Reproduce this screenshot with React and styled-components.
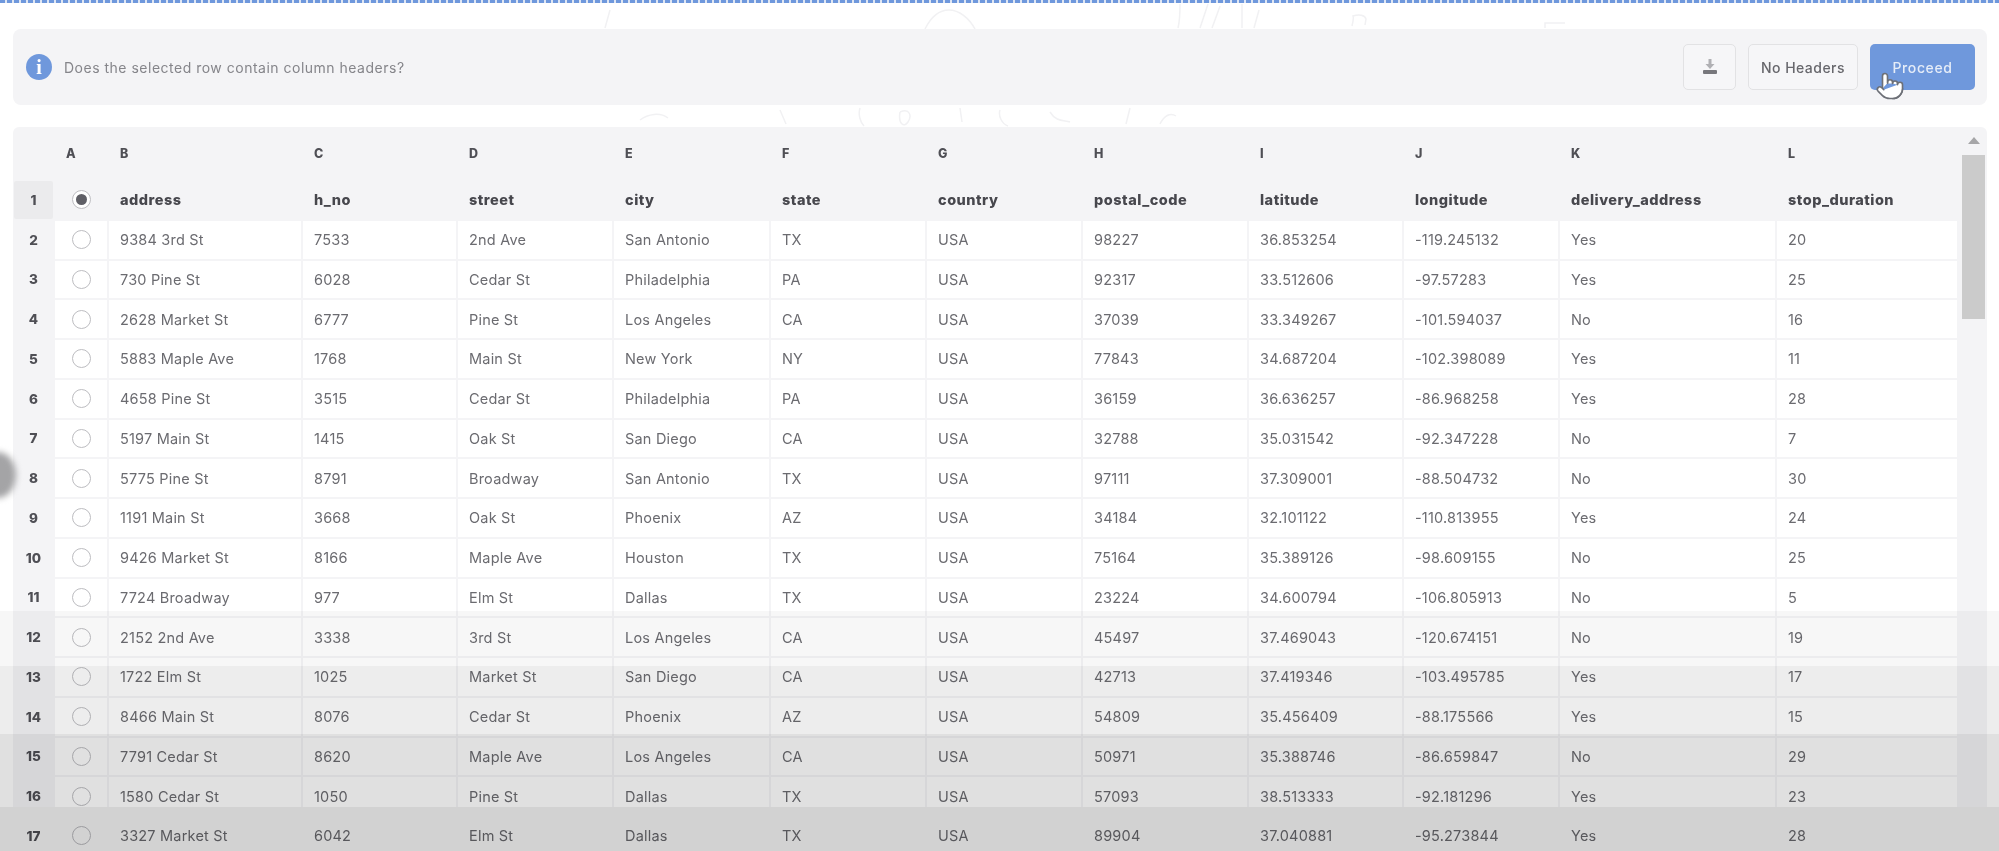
import { Pointer } from "lucide-react";
import styled, { createGlobalStyle } from "styled-components";

const columnLetters = ["B", "C", "D", "E", "F", "G", "H", "I", "J", "K", "L"];

const headers = [
  "address",
  "h_no",
  "street",
  "city",
  "state",
  "country",
  "postal_code",
  "latitude",
  "longitude",
  "delivery_address",
  "stop_duration",
];

const rows = [
  ["9384 3rd St", "7533", "2nd Ave", "San Antonio", "TX", "USA", "98227", "36.853254", "-119.245132", "Yes", "20"],
  ["730 Pine St", "6028", "Cedar St", "Philadelphia", "PA", "USA", "92317", "33.512606", "-97.57283", "Yes", "25"],
  ["2628 Market St", "6777", "Pine St", "Los Angeles", "CA", "USA", "37039", "33.349267", "-101.594037", "No", "16"],
  ["5883 Maple Ave", "1768", "Main St", "New York", "NY", "USA", "77843", "34.687204", "-102.398089", "Yes", "11"],
  ["4658 Pine St", "3515", "Cedar St", "Philadelphia", "PA", "USA", "36159", "36.636257", "-86.968258", "Yes", "28"],
  ["5197 Main St", "1415", "Oak St", "San Diego", "CA", "USA", "32788", "35.031542", "-92.347228", "No", "7"],
  ["5775 Pine St", "8791", "Broadway", "San Antonio", "TX", "USA", "97111", "37.309001", "-88.504732", "No", "30"],
  ["1191 Main St", "3668", "Oak St", "Phoenix", "AZ", "USA", "34184", "32.101122", "-110.813955", "Yes", "24"],
  ["9426 Market St", "8166", "Maple Ave", "Houston", "TX", "USA", "75164", "35.389126", "-98.609155", "No", "25"],
  ["7724 Broadway", "977", "Elm St", "Dallas", "TX", "USA", "23224", "34.600794", "-106.805913", "No", "5"],
  ["2152 2nd Ave", "3338", "3rd St", "Los Angeles", "CA", "USA", "45497", "37.469043", "-120.674151", "No", "19"],
  ["1722 Elm St", "1025", "Market St", "San Diego", "CA", "USA", "42713", "37.419346", "-103.495785", "Yes", "17"],
  ["8466 Main St", "8076", "Cedar St", "Phoenix", "AZ", "USA", "54809", "35.456409", "-88.175566", "Yes", "15"],
  ["7791 Cedar St", "8620", "Maple Ave", "Los Angeles", "CA", "USA", "50971", "35.388746", "-86.659847", "No", "29"],
  ["1580 Cedar St", "1050", "Pine St", "Dallas", "TX", "USA", "57093", "38.513333", "-92.181296", "Yes", "23"],
  ["3327 Market St", "6042", "Elm St", "Dallas", "TX", "USA", "89904", "37.040881", "-95.273844", "Yes", "28"],
];

const GlobalStyle = createGlobalStyle`
  html, body {
    margin: 0;
    background: #ffffff;
    overflow: hidden;
  }
  * {
    box-sizing: border-box;
  }
`;

const Page = styled.div`
  position: relative;
  height: 851px;
  overflow: hidden;
  background: #ffffff;
  font-family: Inter, "Noto Sans", sans-serif;
  font-size: 14.5px;
  color: #707074;
  filter: blur(0.55px);
`;

const DashedStrip = styled.div`
  height: 3px;
  background: repeating-linear-gradient(90deg, #6f98dc 0 5px, #dfe6f2 5px 7px);
`;

const Doodles = styled.svg`
  position: absolute;
  left: 0;
  top: 0;
  width: 1999px;
  height: 130px;
  fill: none;
  stroke: #f1f1f3;
  stroke-width: 1.5;
`;

const Content = styled.main`
  position: relative;
  display: flex;
  flex-direction: column;
  gap: 22px;
  padding: 26px 12px 0 13px;
`;

const PromptBar = styled.section`
  display: flex;
  align-items: center;
  justify-content: space-between;
  height: 76px;
  padding: 0 12px 0 13px;
  border-radius: 8px;
  background: #f4f4f6;
`;

const Prompt = styled.div`
  display: flex;
  align-items: center;
  gap: 12px;
`;

const InfoBadge = styled.span`
  display: flex;
  align-items: center;
  justify-content: center;
  width: 26px;
  height: 26px;
  border-radius: 50%;
  background: #6f98dc;
  color: #ffffff;
  font-family: "Liberation Serif", serif;
  font-size: 20px;
  font-weight: 700;
`;

const PromptText = styled.span`
  color: #85858a;
  font-size: 14px;
  letter-spacing: 0.5px;
`;

const Actions = styled.div`
  display: flex;
  align-items: center;
  gap: 12px;
`;

const GhostButton = styled.button`
  display: flex;
  align-items: center;
  justify-content: center;
  width: ${(props) => (props.$icon ? "53px" : "110px")};
  height: 46px;
  border: 1.5px solid #e2e2e4;
  border-radius: 5px;
  background: #f6f6f8;
  color: #67676c;
  font: 500 14px Inter, sans-serif;
  letter-spacing: 0.45px;
`;

const PrimaryButton = styled.button`
  position: relative;
  width: 105px;
  height: 46px;
  padding: 0;
  border: none;
  border-radius: 5px;
  background: #6f98dc;
  color: #e6edf8;
  font: 500 14px Inter, sans-serif;
  letter-spacing: 0.6px;
`;

const Hand = styled.span`
  position: absolute;
  left: 5px;
  top: 27px;
  line-height: 0;
`;

const TablePanel = styled.section`
  display: flex;
  align-items: flex-start;
  gap: 5px;
  height: 680px;
  padding: 0 1px;
  border-radius: 6px 6px 0 0;
  background: #f4f4f6;
`;

const Sheet = styled.div`
  display: flex;
  flex-direction: column;
  gap: 2px;
  width: 1943px;
`;

const rowTemplate = `
  display: grid;
  grid-template-columns: 39px 52px 192px 153px 154px 155px 154px 154px 164px 153px 154px 215px 180px;
  column-gap: 2px;
`;

const LetterRow = styled.div`
  ${rowTemplate}
  align-items: center;
  height: 52px;
`;

const Letter = styled.span`
  padding-left: 11px;
  color: #4f4f55;
  font-size: 12.5px;
  font-weight: 800;
`;

const SheetRow = styled.div`
  ${rowTemplate}
  height: 37.75px;
`;

const RowNumber = styled.div`
  display: flex;
  align-items: center;
  justify-content: center;
  border-radius: 2px;
  background: ${(props) => (props.$selected ? "#ebebed" : "transparent")};
  color: #4f4f55;
  font-size: 13.5px;
  font-weight: 800;
`;

const RadioCell = styled.div`
  display: flex;
  align-items: center;
  justify-content: center;
  background: ${(props) => (props.$header ? "transparent" : "#ffffff")};
`;

const Radio = styled.span`
  position: relative;
  width: 19px;
  height: 19px;
  border: 1.5px solid #bdbdc1;
  border-radius: 50%;
  background: #ffffff;

  &::after {
    content: "";
    display: ${(props) => (props.$checked ? "block" : "none")};
    position: absolute;
    inset: 3px;
    border-radius: 50%;
    background: #5f5f66;
  }
`;

const Cell = styled.div`
  display: flex;
  align-items: center;
  padding-left: 11px;
  background: ${(props) => (props.$header ? "transparent" : "#ffffff")};
  color: ${(props) => (props.$header ? "#47474d" : "#6b6b70")};
  font-weight: ${(props) => (props.$header ? 800 : 400)};
  letter-spacing: ${(props) => (props.$header ? "0.5px" : "0.2px")};
`;

const ScrollColumn = styled.div`
  display: flex;
  flex-direction: column;
  align-items: center;
  width: 23px;
  padding-top: 10px;
`;

const ScrollArrow = styled.span`
  width: 0;
  height: 0;
  border-left: 6px solid transparent;
  border-right: 6px solid transparent;
  border-bottom: 7px solid #a6a6a8;
  margin-bottom: 11px;
`;

const ScrollThumb = styled.div`
  width: 23px;
  height: 164px;
  background: #cbcbcb;
`;

const EdgeBlob = styled.div`
  position: absolute;
  left: -20px;
  top: 452px;
  width: 36px;
  height: 46px;
  border-radius: 50%;
  background: #a4a4a6;
  filter: blur(3px);
`;

const FadeOverlay = styled.div`
  position: absolute;
  inset: 0;
  pointer-events: none;
  mix-blend-mode: multiply;
  background: linear-gradient(
    180deg,
    #ffffff 0 611px,
    #f7f7f7 611px 666px,
    #ededed 666px 734px,
    #e0e0e0 734px 807px,
    #d2d2d2 807px
  );
`;

function App() {
  return (
    <Page>
      <GlobalStyle />
      <DashedStrip />
      <Doodles viewBox="0 0 1999 130" aria-hidden="true">
        <path d="M925 29c6-12 14-19 24-19s20 8 26 19" />
        <path d="M1178 28c2-8 2-16 2-24M1200 28l8-24M1212 28c3-8 6-16 8-22M1242 28V4M1254 28l5-18" />
        <path d="M1352 26c1-4 2-8 1-10 6-2 12-1 13 3l-1 6M1545 28v-5h20" />
        <path d="M610 10l-5 18M640 120c8-6 20-8 28-2M780 110l6 14M860 108c-2 6 0 14 4 18M900 112c10-4 12 4 8 10s-10 2-8-10" />
        <path d="M960 108l2 14M1000 110c-2 6 2 14 8 16M1050 112c6 10 14 8 20 10M1130 108l-4 16M1160 124c4-8 10-12 16-8" />
      </Doodles>
      <Content>
        <PromptBar>
          <Prompt>
            <InfoBadge>i</InfoBadge>
            <PromptText>Does the selected row contain column headers?</PromptText>
          </Prompt>
          <Actions>
            <GhostButton $icon aria-label="download">
              <svg width="18" height="16" viewBox="0 0 18 16">
                <path d="M7.500 0h3v5h3l-4.500 5-4.500-5h3z" fill="#b0b0b4" />
                <rect x="2" y="11" width="14" height="4" rx="1" fill="#77777c" />
              </svg>
            </GhostButton>
            <GhostButton>No Headers</GhostButton>
            <PrimaryButton>
              Proceed
              <Hand>
                <Pointer size={30} fill="#fff" stroke="#6d7077" strokeWidth={1.3} />
              </Hand>
            </PrimaryButton>
          </Actions>
        </PromptBar>

        <TablePanel>
          <Sheet>
            <LetterRow>
              <span />
              <Letter>A</Letter>
              {columnLetters.map((letter) => (
                <Letter key={letter}>{letter}</Letter>
              ))}
            </LetterRow>

            <SheetRow>
              <RowNumber $selected>1</RowNumber>
              <RadioCell $header>
                <Radio $checked />
              </RadioCell>
              {headers.map((header) => (
                <Cell key={header} $header>
                  {header}
                </Cell>
              ))}
            </SheetRow>

            {rows.map((row, index) => (
              <SheetRow key={row[0]}>
                <RowNumber>{index + 2}</RowNumber>
                <RadioCell>
                  <Radio />
                </RadioCell>
                {row.map((value, col) => (
                  <Cell key={col}>{value}</Cell>
                ))}
              </SheetRow>
            ))}
          </Sheet>

          <ScrollColumn>
            <ScrollArrow />
            <ScrollThumb />
          </ScrollColumn>
        </TablePanel>
      </Content>
      <EdgeBlob />
      <FadeOverlay />
    </Page>
  );
}

export default App;
